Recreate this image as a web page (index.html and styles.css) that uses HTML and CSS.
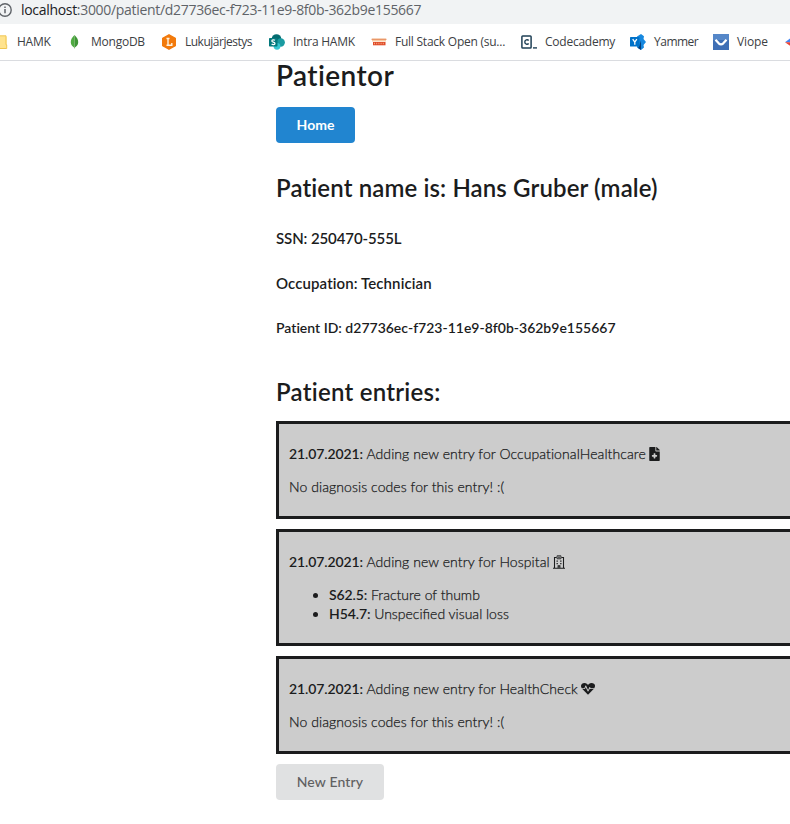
FILE: index.html
```html
<!DOCTYPE html>
<html lang="en">
<head>
<meta charset="utf-8">
<title>Patientor</title>
<link rel="stylesheet" href="styles.css">
</head>
<body>
<header class="browser">
  <div class="address">
    <svg class="info" viewBox="0 0 14 14"><circle cx="7" cy="7" r="6.2" fill="none" stroke="#5f6368" stroke-width="1.4"/><path d="M7 6v4.2M7 3.600v1.500" stroke="#5f6368" stroke-width="1.5"/></svg>
    <span class="url"><span class="host">localhost</span>:3000/patient/d27736ec-f723-11e9-8f0b-362b9e155667</span>
  </div>
  <nav class="bookmarks">
    <a class="bookmark"><svg viewBox="0 0 16 16"><path d="M0 2h12.500l1 1v11.500H0z" fill="#ffe38e"/><path d="M7 1.800h6v9h.7v3.700H7" fill="none" stroke="#efc54f"/></svg><span>HAMK</span></a>
    <a class="bookmark"><svg viewBox="0 0 16 16"><path d="M7.500 1C4.800 3.500 3.500 6 3.800 8.800c.2 2 1.500 3.700 3.300 4.700l.4 1.500z" fill="#4faa41"/><path d="M7.500 1c2.700 2.500 4 5 3.700 7.800-.2 2-1.500 3.700-3.300 4.700L7.500 15z" fill="#3f9536"/></svg><span>MongoDB</span></a>
    <a class="bookmark"><svg viewBox="0 0 16 16"><path d="M8 .8l6.300 3.500v7.400L8 15.200l-6.300-3.500V4.300z" fill="#f27a0c" stroke="#f27a0c" stroke-width="1.400" stroke-linejoin="round"/><path d="M5.500 4.500h3M7 4.500v6.700M5.500 11.300h5.300V9" fill="none" stroke="#fff3df" stroke-width="1.400"/></svg><span class="tight">Lukujärjestys</span></a>
    <a class="bookmark"><svg viewBox="0 0 16 16"><circle cx="7.500" cy="5" r="4.800" fill="#036c70"/><circle cx="11.700" cy="8.500" r="4.200" fill="#1a9ba1"/><circle cx="8" cy="12.300" r="3.400" fill="#37c6d0"/><rect y="4" width="8.500" height="8.500" rx=".7" fill="#03787c"/><path d="M6 6.300c-1-.8-3.200-.7-3.200.6C2.800 8.400 6 7.900 6 9.500c0 1.300-2.200 1.500-3.400.6" fill="none" stroke="#fff" stroke-width="1.200"/></svg><span>Intra HAMK</span></a>
    <a class="bookmark"><svg viewBox="0 0 16 16"><path d="M1 4.500h14v3H1z" fill="#f8cba5"/><path d="M.5 5.300h15" stroke="#e58a5b" stroke-width="1"/><path d="M2 8h12.500v3.300H2z" fill="#df4b29"/><path d="M3 9.500h11" stroke="#f6a57f" stroke-width="1.500" stroke-dasharray="1 1.200"/></svg><span>Full Stack Open (su...</span></a>
    <a class="bookmark"><svg viewBox="0 0 16 16"><rect x=".9" y="1.900" width="9.200" height="12.200" rx=".8" fill="#fff" stroke="#1f4056" stroke-width="1.500"/><path d="M7.700 6.500C6.500 5.200 3.800 5.700 3.800 8s2.700 2.800 3.900 1.600" fill="none" stroke="#1f4056" stroke-width="1.400"/><path d="M12 13.900h4" stroke="#1f4056" stroke-width="1.400"/></svg><span>Codecademy</span></a>
    <a class="bookmark"><svg viewBox="0 0 16 16"><path d="M7 2.500L11 0l3 2.300-.5 2.700L16 8l-2.500 3 .5 2.500L11 16l-4-2.500z" fill="#1688df"/><path d="M9 12.500l2-6V16l-3-2z" fill="#073e78"/><rect y="3" width="9.500" height="9.500" rx=".6" fill="#0072c9"/><path d="M2.700 5.200L4.800 8.200l2-3M4.800 8v2.800" fill="none" stroke="#fff" stroke-width="1.300"/></svg><span class="tight">Yammer</span></a>
    <a class="bookmark"><svg viewBox="0 0 16 16"><rect width="16" height="16" fill="#3f6fb5"/><path d="M0 0h16v6H0z" fill="#5587c8"/><path d="M2.500 5.800l3.200 3.500c1.400 1.300 3.200 1.300 4.600 0l3.200-3.500" fill="none" stroke="#fff" stroke-width="2.300"/></svg><span class="loose">Viope</span></a>
    <a class="bookmark clipped"><svg viewBox="0 0 16 16"><path d="M0 8.200L7 3v5.200z" fill="#4285f4"/><path d="M0 8.200h7v5z" fill="#ea4335"/></svg></a>
  </nav>
</header>
<main class="app">
  <h1>Patientor</h1>
  <button class="button primary">Home</button>
  <h2 class="name">Patient name is: Hans Gruber (male)</h2>
  <h4 class="ssn">SSN: 250470-555L</h4>
  <h4 class="occupation">Occupation: Technician</h4>
  <h5>Patient ID: d27736ec-f723-11e9-8f0b-362b9e155667</h5>
  <h2 class="entries-title">Patient entries:</h2>
  <section class="entry">
    <p><b>21.07.2021:</b> Adding new entry for OccupationalHealthcare<svg class="icon file" viewBox="0 0 384 512"><path fill-rule="evenodd" d="M224 136V0H24C11 0 0 11 0 24v464c0 13 11 24 24 24h336c13 0 24-11 24-24V160H248c-13 0-24-11-24-24zm64 168v32c0 9-7 16-16 16h-48v48c0 9-7 16-16 16h-32c-9 0-16-7-16-16v-48h-48c-9 0-16-7-16-16v-32c0-9 7-16 16-16h48v-48c0-9 7-16 16-16h32c9 0 16 7 16 16v48h48c9 0 16 7 16 16zm96-182v6H256V0h6c6 0 12 3 17 7l98 98c4 5 7 11 7 17z"/></svg></p>
    <p>No diagnosis codes for this entry! :(</p>
  </section>
  <section class="entry listed">
    <p><b>21.07.2021:</b> Adding new entry for Hospital<svg class="icon hospital" viewBox="0 0 448 512"><path d="M56 488V88h80M312 88h80v400M0 488h448M192 488v-88h64v88" fill="none" stroke="currentColor" stroke-width="40"/><path d="M152 24h144v112H152z" fill="none" stroke="currentColor" stroke-width="32"/><path d="M224 46v68M190 80h68" stroke="currentColor" stroke-width="24"/><path d="M132 200h48v44h-48zm136 0h48v44h-48zM132 296h48v44h-48zm136 0h48v44h-48z"/></svg></p>
    <ul>
      <li><b>S62.5:</b> Fracture of thumb</li>
      <li><b>H54.7:</b> Unspecified visual loss</li>
    </ul>
  </section>
  <section class="entry">
    <p><b>21.07.2021:</b> Adding new entry for HealthCheck<svg class="icon heart" viewBox="0 0 512 512"><path d="M320 243l-49 98c-6 12-23 12-29-1l-70-151-27 67H49l187 191c11 12 29 12 40 0l187-191H342zm154-181c-55-46-136-37-187 15l-31 32-31-32C175 25 93 16 38 62c-52 44-48 116-9 162h94l36-87c6-13 24-13 30 0l69 153 48-96c6-12 23-12 29 0l15 30h133c39-46 44-118-9-162z"/></svg></p>
    <p>No diagnosis codes for this entry! :(</p>
  </section>
  <button class="button secondary">New Entry</button>
</main>
</body>
</html>
```
FILE: styles.css
```css
* { box-sizing: border-box; }
body { margin: 0; height: 824px; overflow: hidden; background: #fff; color: #1b1c1d; font: 300 14px/20px Lato, sans-serif; font-variant-ligatures: none; }
.browser { height: 61px; border-bottom: 1px solid #dadce0; font-family: "Open Sans", sans-serif; font-weight: 400; }
.address { height: 24px; display: flex; align-items: center; padding-bottom: 4px; background: #f1f3f4; color: #5f6368; }
.info { width: 14px; height: 14px; margin-left: -2px; margin-right: 9px; flex: none; }
.url { font-size: 14px; line-height: 20px; white-space: nowrap; letter-spacing: -0.31px; }
.host { color: #202124; }
.bookmarks { height: 36px; margin-left: -7px; display: grid; grid-template-columns: 74px 94px 108px 102px 150px 109px 83px 72px 5px; align-items: center; }
.bookmark { display: flex; align-items: center; gap: 8px; font-size: 12px; line-height: 16px; letter-spacing: -0.24px; color: #3c4043; white-space: nowrap; }
.bookmark svg { width: 16px; height: 16px; flex: none; }
.bookmark .tight { letter-spacing: -0.5px; }
.bookmark .loose { letter-spacing: -0.1px; }
.clipped { overflow: hidden; }
.app { margin-left: 276px; white-space: nowrap; }
h1, h2, h4, h5 { margin: 0; font-weight: 600; }
h1 { font-size: 28px; line-height: 36px; height: 50px; margin-top: -4px; letter-spacing: 0.4px; }
h2 { font-size: 24px; line-height: 31px; letter-spacing: 0.12px; }
h4 { font-size: 15px; line-height: 19px; }
h5 { font-size: 14px; line-height: 18px; }
.name { margin-top: 29px; }
.ssn { margin-top: 26px; letter-spacing: -0.1px; }
.occupation { margin-top: 26px; letter-spacing: 0.1px; }
h5 { margin-top: 26px; }
.entries-title { margin-top: 39px; height: 45px; letter-spacing: 0.25px; }
.button { display: block; height: 36px; border: 0; border-radius: 4px; padding: 0 20px; font: 500 14px/14px Lato, sans-serif; background: #e0e1e2; color: #5f6061; }
.primary { background: #2185d0; color: #fff; font-weight: 700; width: 79px; }
.secondary { width: 108px; letter-spacing: 0.15px; }
.entry { border: 3px solid #1b1c1d; border-right: 0; background: #ccc; padding: 20px 10px; margin-bottom: 10px; height: 98px; -webkit-text-stroke: 0.25px currentColor; }
.listed { height: 117px; }
p { margin: 0 0 13px; letter-spacing: 0.08px; }
.entry b { font-weight: 600; letter-spacing: -0.1px; -webkit-text-stroke: 0; }
ul { margin: 0; padding-left: 40px; }
li { line-height: 19px; font-variant-ligatures: normal; }
.icon { height: 14px; vertical-align: -2px; margin-left: 3px; fill: currentColor; }
.file { width: 11px; }
.hospital { width: 12px; }
.heart { width: 14px; }
```
